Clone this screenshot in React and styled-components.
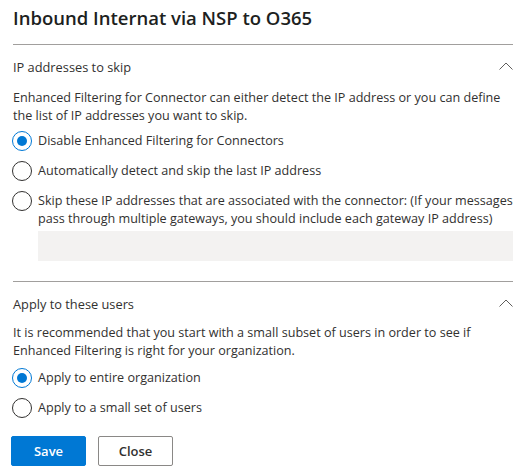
import React, { useState } from 'react'
import styled, { createGlobalStyle } from 'styled-components'

const Global = createGlobalStyle`
  html, body {
    margin: 0;
    padding: 0;
    background: #ffffff;
  }
  body {
    font-family: "Open Sans", "Noto Sans", sans-serif;
    color: #323130;
  }
`;

const Page = styled.div`
  width: 520px;
  box-sizing: border-box;
  padding: 4px 7px 0 13px;
  display: flex;
  flex-direction: column;
`;

const Title = styled.h1`
  margin: 0;
  font-size: 18.5px;
  line-height: 28px;
  font-weight: 600;
  color: #201f1e;
`;

const Divider = styled.div`
  flex: none;
  height: 1px;
  background: #a19f9d;
  margin-top: ${p => p.$top}px;
`;

const SectionHeader = styled.div`
  display: flex;
  align-items: center;
  justify-content: space-between;
  height: 20px;
  margin-top: ${p => p.$top}px;
  font-size: 12.8px;
  line-height: 20px;
`;

const Chevron = styled.svg`
  width: 14px;
  height: 8px;
  margin-top: -3px;
`;

const Description = styled.p`
  margin: ${p => p.$top}px 0 0;
  font-size: 12.6px;
  line-height: 18px;
  color: #323130;
`;

const Options = styled.div`
  display: flex;
  flex-direction: column;
  gap: 11px;
  margin-top: ${p => p.$top}px;
`;

const Option = styled.label`
  display: flex;
  align-items: flex-start;
  gap: 6px;
  font-size: 12.6px;
  line-height: 18px;
  cursor: pointer;
  margin-left: -1px;
`;

const Circle = styled.span`
  flex: none;
  width: 20px;
  height: 20px;
  box-sizing: border-box;
  border-radius: 50%;
  border: 1px solid ${p => (p.$checked ? '#0078d4' : '#323130')};
  display: flex;
  align-items: center;
  justify-content: center;
  margin-top: -1px;
  &::after {
    content: '';
    width: 10px;
    height: 10px;
    border-radius: 50%;
    background: ${p => (p.$checked ? '#0078d4' : 'transparent')};
  }
`;

const IpInput = styled.div`
  flex: none;
  margin: 3px 0 0 25px;
  height: 30px;
  background: #f3f2f1;
`;

const Footer = styled.div`
  display: flex;
  gap: 12px;
  margin: 18px 0 0 -2px;
`;

const Button = styled.button`
  width: 75px;
  height: 30px;
  box-sizing: border-box;
  border-radius: 2px;
  font-family: inherit;
  font-size: 13px;
  font-weight: 600;
  cursor: pointer;
  border: 1px solid ${p => (p.$primary ? '#0078d4' : '#8a8886')};
  background: ${p => (p.$primary ? '#0078d4' : '#ffffff')};
  color: ${p => (p.$primary ? '#ffffff' : '#323130')};
`;

function ChevronUp() {
  return (
    <Chevron viewBox="0 0 14 8">
      <polyline points="0.5,7.5 7,1 13.5,7.5" fill="none" stroke="#605e5c" strokeWidth="1" />
    </Chevron>
  );
}

function Radio({ checked, onSelect, children }) {
  return (
    <Option onClick={onSelect}>
      <Circle $checked={checked} />
      <span>{children}</span>
    </Option>
  );
}

export default function App() {
  const [skip, setSkip] = useState('disable');
  const [scope, setScope] = useState('org');

  return (
    <>
      <Global />
      <Page>
        <Title>Inbound Internat via NSP to O365</Title>
        <Divider $top={12} />

        <SectionHeader $top={12}>
          IP addresses to skip
          <ChevronUp />
        </SectionHeader>
        <Description $top={12}>
          Enhanced Filtering for Connector can either detect the IP address or you can define the list of IP addresses you want to skip.
        </Description>
        <Options $top={7}>
          <Radio checked={skip === 'disable'} onSelect={() => setSkip('disable')}>
            Disable Enhanced Filtering for Connectors
          </Radio>
          <Radio checked={skip === 'auto'} onSelect={() => setSkip('auto')}>
            Automatically detect and skip the last IP address
          </Radio>
          <Radio checked={skip === 'list'} onSelect={() => setSkip('list')}>
            Skip these IP addresses that are associated with the connector: (If your messages pass through multiple gateways, you should include each gateway IP address)
          </Radio>
        </Options>
        <IpInput />

        <Divider $top={20} />

        <SectionHeader $top={12}>
          Apply to these users
          <ChevronUp />
        </SectionHeader>
        <Description $top={10}>
          It is recommended that you start with a small subset of users in order to see if Enhanced Filtering is right for your organization.
        </Description>
        <Options $top={9}>
          <Radio checked={scope === 'org'} onSelect={() => setScope('org')}>
            Apply to entire organization
          </Radio>
          <Radio checked={scope === 'small'} onSelect={() => setScope('small')}>
            Apply to a small set of users
          </Radio>
        </Options>

        <Footer>
          <Button $primary>Save</Button>
          <Button>Close</Button>
        </Footer>
      </Page>
    </>
  );
}
